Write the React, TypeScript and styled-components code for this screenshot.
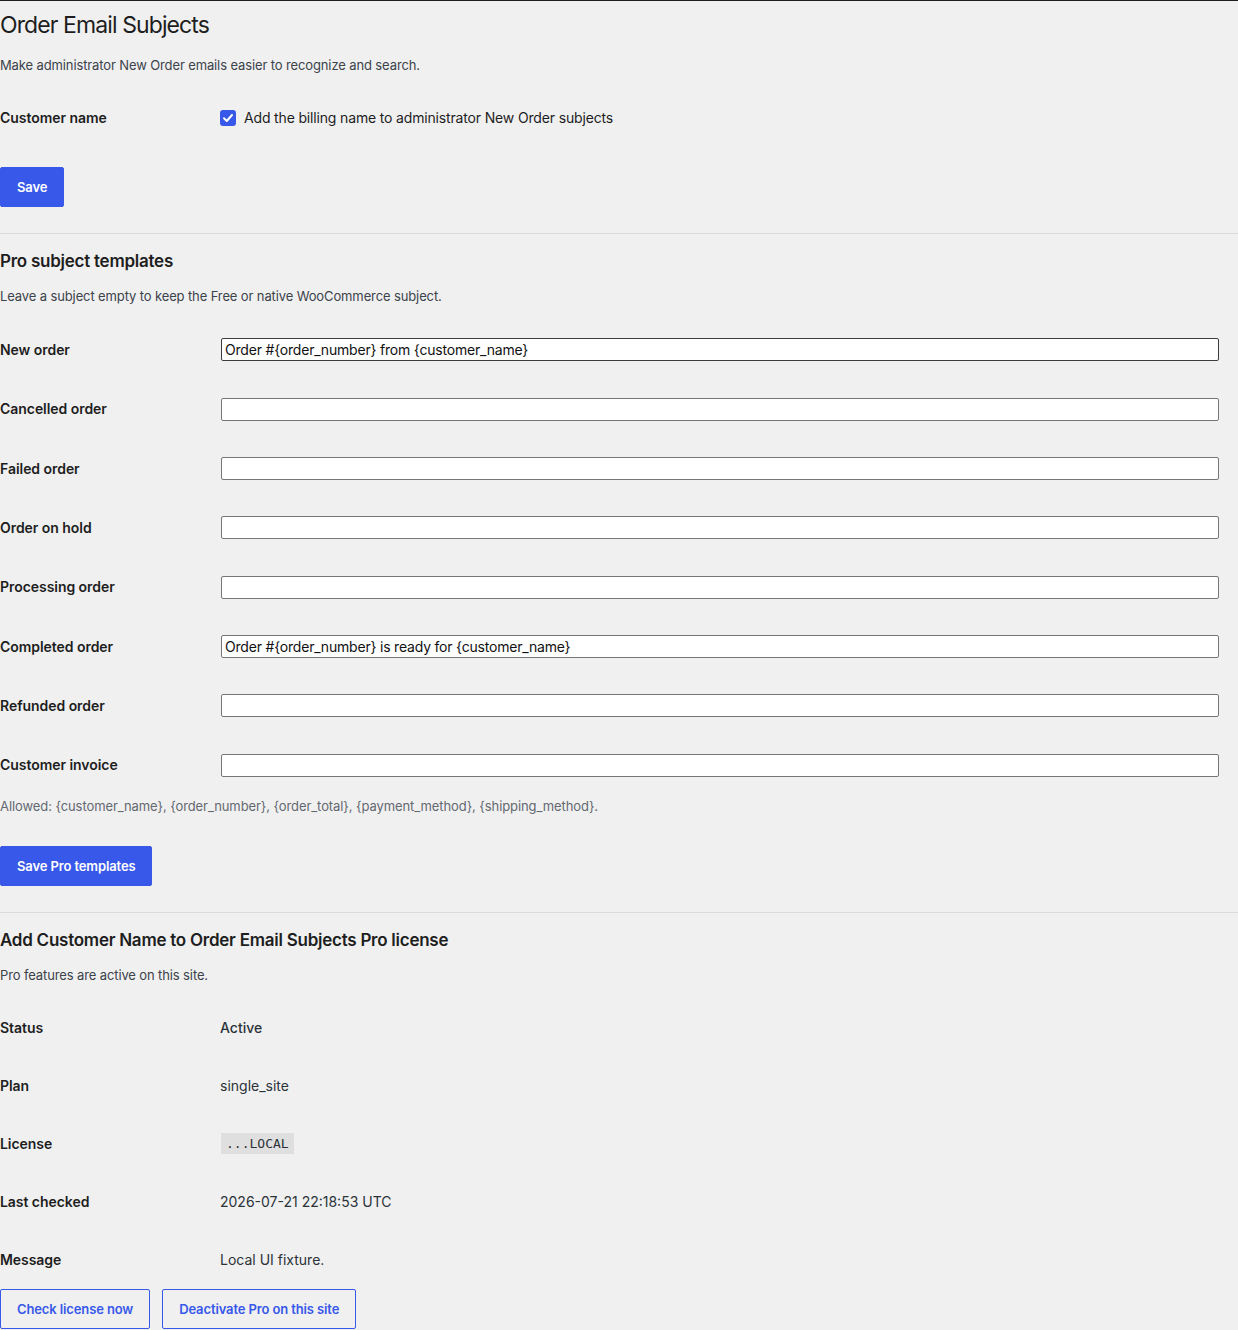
import React from "react";
import styled, { createGlobalStyle } from "styled-components";

const GlobalStyle = createGlobalStyle`
  html, body {
    margin: 0;
    padding: 0;
    background: #f0f0f1;
  }
  body {
    font-family: Inter, "Noto Sans", "Liberation Sans", sans-serif;
    color: #1e1e1e;
    -webkit-font-smoothing: antialiased;
  }
`;

const Page = styled.div`
  border-top: 1px solid #1e1e1e;
  width: 1238px;
  min-height: 1329px;
`;

const Title = styled.h1`
  margin: 9px 0 0;
  font-size: 23px;
  line-height: 30px;
  font-weight: 400;
  letter-spacing: -0.9px;
`;

const SectionTitle = styled.h2`
  margin: 16px 0 0;
  font-size: 17px;
  line-height: 22px;
  font-weight: 600;
  letter-spacing: -0.25px;
`;

const Lead = styled.p<{ $top?: number }>`
  margin: ${(p) => p.$top ?? 14}px 0 0;
  font-size: 13px;
  line-height: 20px;
  color: #3c434a;
  letter-spacing: -0.12px;
`;

const Hint = styled.p`
  margin: 1px 0 0;
  font-size: 13px;
  line-height: 20px;
  color: #646970;
  letter-spacing: -0.09px;
`;

const Table = styled.div<{ $top: number; $row: number }>`
  margin-top: ${(p) => p.$top}px;
  display: grid;
  grid-template-columns: 220px 1fr;
  grid-auto-rows: ${(p) => p.$row}px;
  align-items: center;
`;

const Label = styled.div`
  font-size: 14px;
  font-weight: 600;
  line-height: 20px;
  letter-spacing: -0.05px;
`;

const Value = styled.div`
  font-size: 14px;
  line-height: 20px;
  color: #2c3338;
  display: flex;
  align-items: center;
  padding-right: 19px;
`;

const CheckLabel = styled.label`
  display: flex;
  align-items: center;
  gap: 8px;
  font-size: 14px;
  color: #1e1e1e;
  letter-spacing: -0.16px;
`;

const CheckBox = styled.span`
  width: 16px;
  height: 16px;
  border-radius: 3px;
  background: #3858e9;
  display: inline-flex;
  align-items: center;
  justify-content: center;
`;

const TextInput = styled.input<{ $focus?: boolean }>`
  box-sizing: border-box;
  width: 100%;
  height: 23px;
  margin-left: 1px;
  padding: 0 3px;
  border: 1px solid ${(p) => (p.$focus ? "#3c3c3c" : "#767676")};
  border-radius: 2px;
  background: #fff;
  font-family: Inter, "Noto Sans", "Liberation Sans", sans-serif;
  font-size: 14px;
  letter-spacing: -0.2px;
  color: #111;
  outline: none;
`;

const Button = styled.button<{ $top: number; $outline?: boolean }>`
  margin-top: ${(p) => p.$top}px;
  height: 40px;
  padding: 0 16px;
  border-radius: 2px;
  border: 1px solid #3858e9;
  background: ${(p) => (p.$outline ? "transparent" : "#3858e9")};
  color: ${(p) => (p.$outline ? "#3858e9" : "#fff")};
  font-family: Inter, "Noto Sans", "Liberation Sans", sans-serif;
  font-size: 13px;
  font-weight: 600;
  letter-spacing: -0.12px;
  cursor: pointer;
`;

const ButtonRow = styled.div`
  display: flex;
  gap: 12px;
`;

const Divider = styled.hr<{ $top: number }>`
  margin: ${(p) => p.$top}px 0 0;
  border: 0;
  border-top: 1px solid #dcdcde;
  height: 0;
`;

const Code = styled.code`
  margin-left: 1px;
  padding: 2px 5px;
  background: rgba(0, 0, 0, 0.07);
  font-family: "DejaVu Sans Mono", "Liberation Mono", monospace;
  font-size: 13px;
  line-height: 17px;
  color: #2c3338;
`;

const Strong = styled.span`
  font-weight: 500;
`;

const templates: [string, string][] = [
  ["New order", "Order #{order_number} from {customer_name}"],
  ["Cancelled order", ""],
  ["Failed order", ""],
  ["Order on hold", ""],
  ["Processing order", ""],
  ["Completed order", "Order #{order_number} is ready for {customer_name}"],
  ["Refunded order", ""],
  ["Customer invoice", ""],
];

const licenseRows: [string, React.ReactNode][] = [
  ["Status", <Strong>Active</Strong>],
  ["Plan", "single_site"],
  ["License", <Code>...LOCAL</Code>],
  ["Last checked", "2026-07-21 22:18:53 UTC"],
  ["Message", "Local UI fixture."],
];

export default function App() {
  return (
    <Page>
      <GlobalStyle />
      <Title>Order Email Subjects</Title>
      <Lead $top={15}>Make administrator New Order emails easier to recognize and search.</Lead>

      <Table $top={14} $row={58}>
        <Label>Customer name</Label>
        <Value>
          <CheckLabel>
            <CheckBox>
              <svg width="12" height="12" viewBox="0 0 12 12">
                <path d="M2 6.3 L4.8 9 L10 3" fill="none" stroke="#fff" strokeWidth="2" strokeLinecap="round" strokeLinejoin="round" />
              </svg>
            </CheckBox>
            Add the billing name to administrator New Order subjects
          </CheckLabel>
        </Value>
      </Table>
      <Button $top={20}>Save</Button>

      <Divider $top={26} />
      <SectionTitle>Pro subject templates</SectionTitle>
      <Lead>Leave a subject empty to keep the Free or native WooCommerce subject.</Lead>
      <Table $top={14.33} $row={59.33}>
        {templates.map(([label, value], i) => (
          <React.Fragment key={label}>
            <Label>{label}</Label>
            <Value>
              <TextInput $focus={i === 0} defaultValue={value} />
            </Value>
          </React.Fragment>
        ))}
      </Table>
      <Hint>
        Allowed: {"{customer_name}"}, {"{order_number}"}, {"{order_total}"}, {"{payment_method}"},{" "}
        {"{shipping_method}"}.
      </Hint>
      <Button $top={30}>Save Pro templates</Button>

      <Divider $top={26} />
      <SectionTitle>Add Customer Name to Order Email Subjects Pro license</SectionTitle>
      <Lead>Pro features are active on this site.</Lead>
      <Table $top={14} $row={58}>
        {licenseRows.map(([label, value]) => (
          <React.Fragment key={label}>
            <Label>{label}</Label>
            <Value>{value}</Value>
          </React.Fragment>
        ))}
      </Table>
      <ButtonRow>
        <Button $top={0} $outline>
          Check license now
        </Button>
        <Button $top={0} $outline>
          Deactivate Pro on this site
        </Button>
      </ButtonRow>
    </Page>
  );
}
